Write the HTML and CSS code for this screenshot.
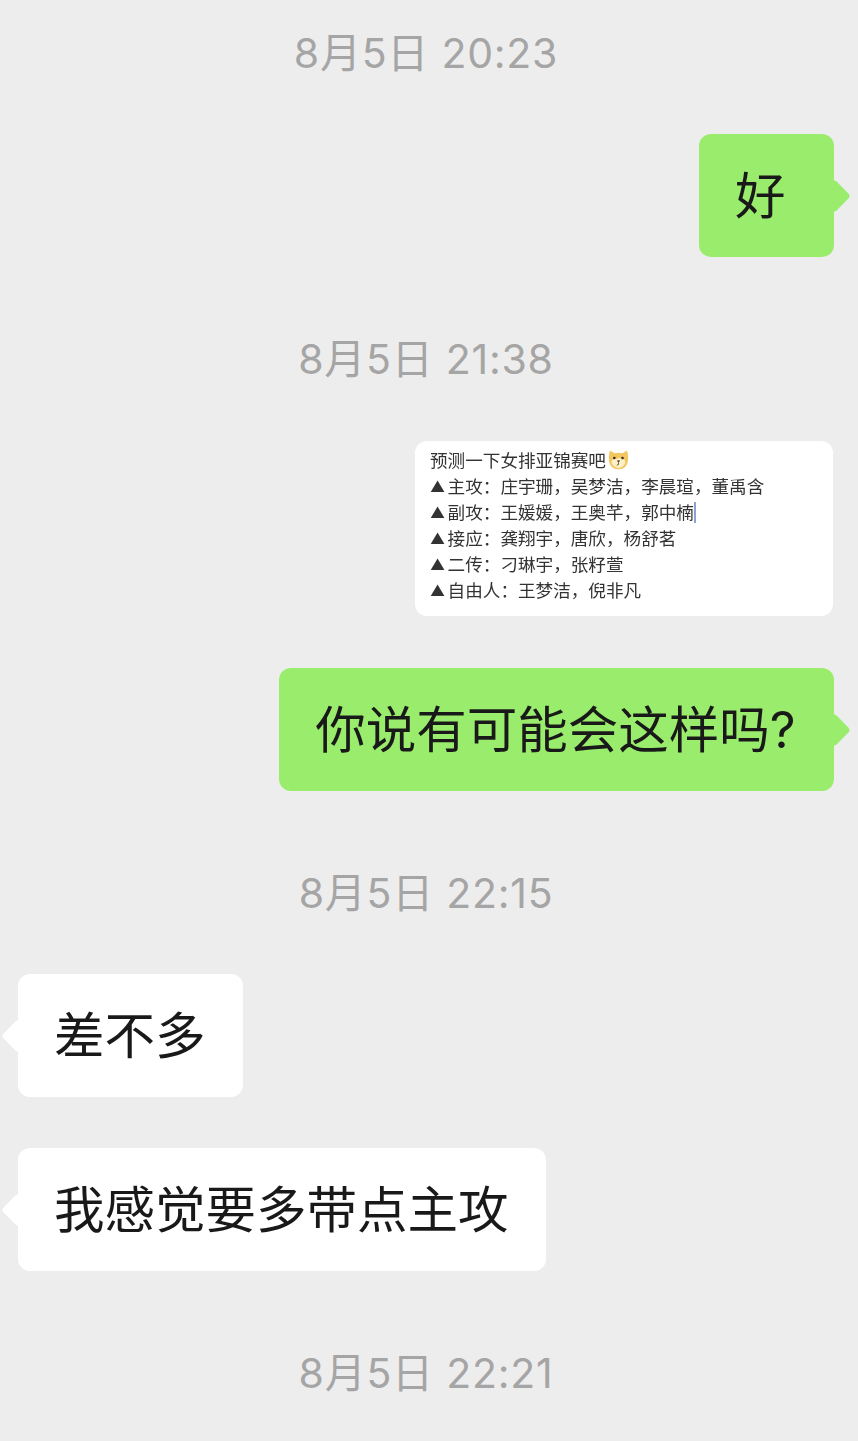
FILE: index.html
```html
<!DOCTYPE html>
<html lang="zh-CN">
<head>
    <meta charset="UTF-8">
    <meta name="viewport" content="width=device-width, initial-scale=1.0">
    <title>聊天记录</title>
    <link rel="stylesheet" href="styles.css">
</head>
<body>
    <div class="chat">
        <div class="time first">8月5日 20:23</div>
        <div class="row mine after-time">
            <div class="bubble green">好</div>
        </div>

        <div class="time">8月5日 21:38</div>
        <div class="row mine before-card">
            <div class="card">
                <div>预测一下女排亚锦赛吧<svg class="emoji" viewBox="0 0 22 22" aria-hidden="true">
                    <path d="M2 1.5 L7 4.5 Q11 3.6 15 4.5 L20 1.5 Q21.6 8 21 12 Q20 21 11 21.2 Q2 21 1 12 Q.4 8 2 1.5 Z" fill="#f2c75f"/>
                    <path d="M3.5 14 Q4.5 9.5 9 10.5 Q12 8.5 15 10.5 Q18.5 11 18 15 Q15.5 20 10.5 19.8 Q5.5 19.4 3.5 14 Z" fill="#fdf0c8"/>
                    <circle cx="6.6" cy="9.4" r="1.4" fill="#3f3020"/>
                    <circle cx="15.2" cy="9.4" r="1.4" fill="#3f3020"/>
                    <path d="M9.2 12 L12.8 12 L11 14.4 Z" fill="#3f3020"/>
                    <path d="M11 14.4 Q11.8 16.8 9.2 17" fill="none" stroke="#6d5230" stroke-width="1"/>
                </svg></div>
                <div><span class="mark">▲</span>主攻：庄宇珊，吴梦洁，李晨瑄，董禹含</div>
                <div><span class="mark">▲</span>副攻：王媛媛，王奥芊，郭中楠<span class="caret"></span></div>
                <div><span class="mark">▲</span>接应：龚翔宇，唐欣，杨舒茗</div>
                <div><span class="mark">▲</span>二传：刁琳宇，张籽萱</div>
                <div><span class="mark">▲</span>自由人：王梦洁，倪非凡</div>
            </div>
        </div>
        <div class="row mine after-card">
            <div class="bubble green question">你说有可能会这样吗?</div>
        </div>

        <div class="time">8月5日 22:15</div>
        <div class="row after-time">
            <div class="bubble white">差不多</div>
        </div>
        <div class="row after-bubble">
            <div class="bubble white">我感觉要多带点主攻</div>
        </div>

        <div class="time">8月5日 22:21</div>
    </div>
</body>
</html>
```

FILE: styles.css
```css
html, body {
    margin: 0;
    height: 100%;
    overflow: hidden;
}
body {
    background-color: #ededed;
    color: #191919;
    font-family: Inter, "Noto Sans CJK SC", sans-serif;
}
.chat {
    padding: 0 24px 0 18px;
}
.time {
    margin-top: 74px;
    height: 56px;
    line-height: 57px;
    font-size: 41px;
    color: #a5a5a5;
    text-align: center;
    letter-spacing: 0.75px;
}
.time.first {
    margin-top: 0;
    padding-top: 25px;
}
.row {
    display: flex;
}
.row.mine {
    justify-content: flex-end;
}
.after-time {
    margin-top: 53px;
}
.before-card {
    margin-top: 54px;
}
.after-card {
    margin-top: 52px;
}
.after-bubble {
    margin-top: 51px;
}
.bubble {
    position: relative;
    box-sizing: border-box;
    min-width: 135px;
    height: 123px;
    padding: 0 37px 0 36px;
    line-height: 123px;
    font-size: 50.5px;
    border-radius: 12px;
}
.bubble.question {
    padding: 0 38.5px 0 36.5px;
}
.bubble::after {
    content: "";
    position: absolute;
    top: 50%;
    width: 24px;
    height: 24px;
    margin-top: -12px;
    border-radius: 4px;
    background-color: inherit;
    transform: rotate(45deg);
}
.green {
    background-color: #9aec6c;
}
.green::after {
    right: -12px;
}
.white {
    background-color: #fff;
}
.white::after {
    left: -12px;
}
.card {
    box-sizing: border-box;
    width: 418px;
    height: 175px;
    margin-right: 1px;
    padding: 7px 15px;
    background-color: #fff;
    border-radius: 12px;
    font-size: 17.6px;
    line-height: 26px;
    color: #333;
    filter: blur(0.4px);
}
.mark {
    display: inline-block;
    width: 17.6px;
    font-size: 15px;
    vertical-align: 1px;
}
.emoji {
    width: 21px;
    height: 21px;
    vertical-align: -3px;
    margin-left: 2px;
}
.caret {
    display: inline-block;
    width: 2px;
    height: 21px;
    vertical-align: -4px;
    background-color: #8f9fd8;
}
```
